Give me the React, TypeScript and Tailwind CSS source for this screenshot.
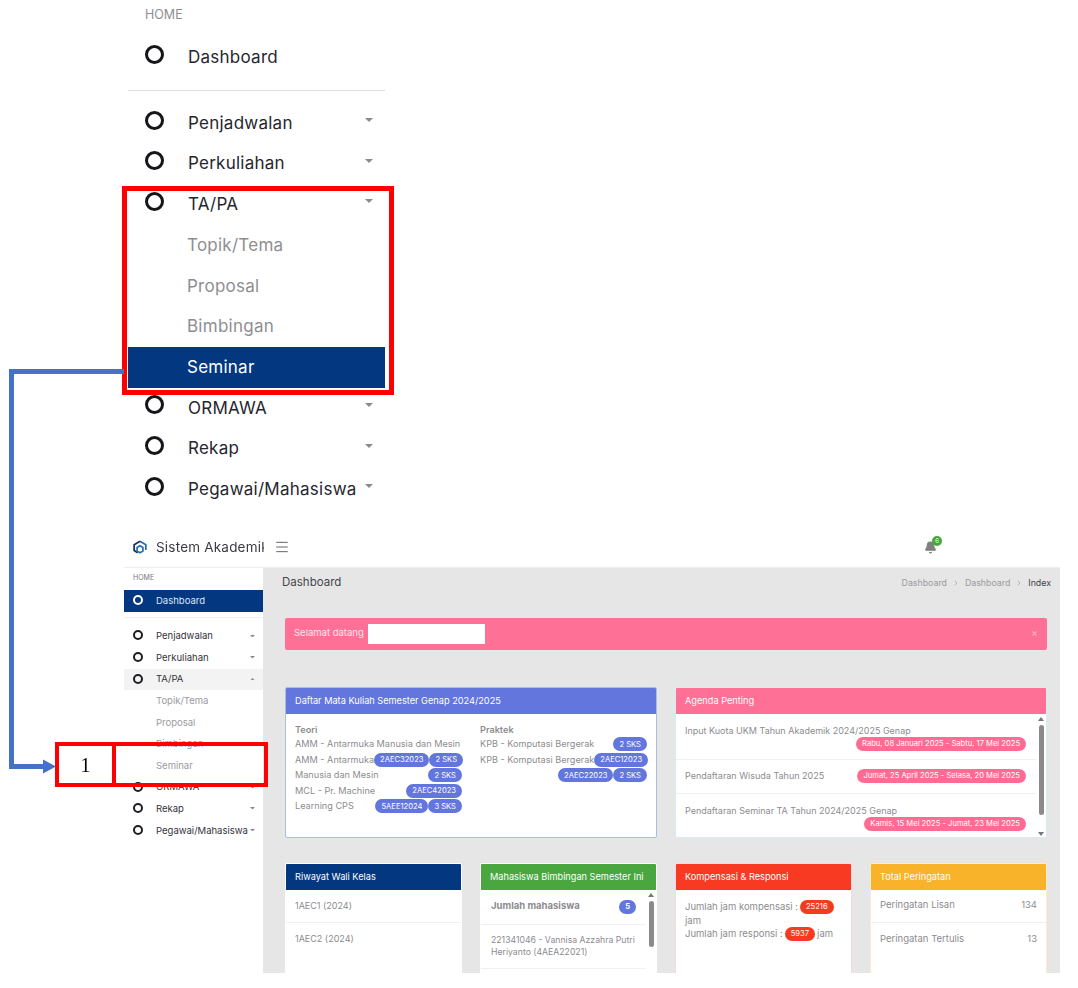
import { Bell, Menu, X, ChevronRight } from 'lucide-react';
import type { ReactNode } from 'react';

const caret = (
  <svg viewBox="0 0 8 4" className="h-[4px] w-[8px] fill-[#8a8a8f]">
    <path d="M0 0h8L4 4z" />
  </svg>
);

function TopItem({ label, arrow = true }: { label: string; arrow?: boolean }) {
  return (
    <div className="flex h-[40.7px] items-center pl-[17px]">
      <span className="mb-[6px] h-[19px] w-[19px] shrink-0 rounded-full border-[3px] border-[#15151a]" />
      <span className="ml-[24px] mt-[1px] whitespace-nowrap text-[17px] tracking-[0.25px] text-[#26262e]">{label}</span>
      {arrow && <span className="absolute left-[237px] mb-[6px]">{caret}</span>}
    </div>
  );
}

function TopSub({ label, active = false }: { label: string; active?: boolean }) {
  return (
    <div
      className={`flex h-[40.7px] items-center pl-[59px] text-[17px] tracking-[0.25px] ${
        active ? 'bg-[#03377f] text-white' : 'text-[#8e8e92]'
      }`}
    >
      <span className="mt-[1px]">{label}</span>
    </div>
  );
}

function SideItem({ label, open = false }: { label: string; open?: boolean }) {
  return (
    <div className={`relative flex h-[21.6px] items-center pl-[9px] ${open ? 'bg-[#f3f3f3]' : ''}`}>
      <span className="mb-[2px] h-[10px] w-[10px] shrink-0 rounded-full border-[2px] border-[#1d1d24]" />
      <span className="ml-[13px] whitespace-nowrap text-[9.5px] text-[#33333b]">{label}</span>
      <span className="absolute right-[8px] top-[9px]">
        <svg viewBox="0 0 8 4" className="h-[2.5px] w-[5px] fill-[#8a8a8f]">
          <path d={open ? 'M0 4h8L4 0z' : 'M0 0h8L4 4z'} />
        </svg>
      </span>
    </div>
  );
}

function SideSub({ label }: { label: string }) {
  return <div className="flex h-[21.6px] items-center pl-[32px] text-[9.5px] text-[#9a9a9e]">{label}</div>;
}

function Badge({ children, className = 'bg-[#6376dd]' }: { children: ReactNode; className?: string }) {
  return (
    <span className={`flex h-[14px] items-center whitespace-nowrap rounded-full px-[6px] text-[7.6px] text-white ${className}`}>
      {children}
    </span>
  );
}

function CourseRow({ label, badges }: { label?: string; badges: string[] }) {
  return (
    <div className="flex h-[15.5px] items-center justify-between whitespace-nowrap">
      <span>{label}</span>
      <span className="flex">
        {badges.map((b) => (
          <Badge key={b}>{b}</Badge>
        ))}
      </span>
    </div>
  );
}

function Card({ title, color, border, children }: { title: string; color: string; border: string; children: ReactNode }) {
  return (
    <div className={`h-full overflow-hidden rounded-[2px] border bg-white text-[9.5px] text-[#8c8c90] ${border}`}>
      <div className={`flex h-[26px] items-center whitespace-nowrap pl-[9px] text-[9.2px] text-white ${color}`}>{title}</div>
      {children}
    </div>
  );
}

function ScrollTrack({ top, height }: { top: string; height: string }) {
  return (
    <div className="absolute bottom-0 right-0 top-0 w-[10px]">
      <div className="absolute left-[2px] top-[3px] h-0 w-0 border-x-[3px] border-b-[4px] border-x-transparent border-b-[#777]" />
      <div className={`absolute left-[2.5px] w-[5px] rounded-full bg-[#8a8a8a] ${top} ${height}`} />
    </div>
  );
}

export default function App() {
  return (
    <div className="relative h-[988px] w-[1078px] overflow-hidden bg-white font-['Inter',sans-serif]">
      {/* Menu detail */}
      <div className="ml-[128px] w-[257px]">
        <div className="flex h-[37px] items-start pl-[17px] pt-[6px] text-[12.5px] text-[#8e8e92]">HOME</div>
        <div className="relative"><TopItem label="Dashboard" arrow={false} /></div>
        <div className="mt-[12px] h-px bg-[#dcdcde]" />
        <div className="relative mt-[12px]">
          <TopItem label="Penjadwalan" />
        </div>
        <div className="relative"><TopItem label="Perkuliahan" /></div>
        <div className="relative"><TopItem label="TA/PA" /></div>
        <TopSub label="Topik/Tema" />
        <TopSub label="Proposal" />
        <TopSub label="Bimbingan" />
        <TopSub label="Seminar" active />
        <div className="relative"><TopItem label="ORMAWA" /></div>
        <div className="relative"><TopItem label="Rekap" /></div>
        <div className="relative"><TopItem label="Pegawai/Mahasiswa" /></div>
      </div>

      {/* Full page capture */}
      <div className="ml-[124px] mt-[17px] h-[446px] w-[936px] overflow-hidden blur-[0.3px]">
        <header className="flex h-[40px] items-center pt-[1px]">
          <svg viewBox="0 0 24 24" className="ml-[9px] h-[14px] w-[14px]" fill="none" strokeWidth="3">
            <path d="M12 2 22 8v9" stroke="#2a6fb0" />
            <path d="M12 2 2 8v10l6 4" stroke="#16324f" />
            <path d="M12 10l5 3v6l-5 3-5-3v-6z" stroke="#2a6fb0" />
          </svg>
          <div className="ml-[9px] w-[108px] overflow-hidden whitespace-nowrap text-[13.5px] tracking-[0.2px] text-[#3a3a42]">Sistem Akademik</div>
          <Menu className="ml-[10px] h-[16px] w-[16px] text-[#666]" strokeWidth={1.5} />
          <div className="relative ml-[634px]">
            <Bell className="h-[13px] w-[13px] fill-[#808080] text-[#808080]" />
            <span className="absolute -right-[5px] -top-[5px] flex h-[10px] w-[10px] items-center justify-center rounded-full bg-[#45a93a] text-[6px] text-white">6</span>
          </div>
        </header>
        <div className="flex h-[406px] border-t border-[#eeeeee]">
          <aside className="w-[139px] shrink-0 bg-white">
            <div className="flex h-[22px] items-center pl-[9px] text-[7px] text-[#77777c]">HOME</div>
            <div className="flex h-[22px] items-center bg-[#03377f] pl-[9px]">
              <span className="mb-[1px] h-[10px] w-[10px] rounded-full border-[2px] border-white" />
              <span className="ml-[13px] mt-[2px] text-[9.5px] text-[#dfe6f5]">Dashboard</span>
            </div>
            <div className="mt-[5px] h-[1px] bg-[#f0f0f0]" />
            <div className="mt-[8px]">
              <SideItem label="Penjadwalan" />
              <SideItem label="Perkuliahan" />
              <SideItem label="TA/PA" open />
              <SideSub label="Topik/Tema" />
              <SideSub label="Proposal" />
              <SideSub label="Bimbingan" />
              <SideSub label="Seminar" />
              <SideItem label="ORMAWA" />
              <SideItem label="Rekap" />
              <SideItem label="Pegawai/Mahasiswa" />
            </div>
          </aside>

          <main className="min-w-0 flex-1 bg-[#e6e6e6]">
            <div className="flex h-[31px] items-center justify-between pl-[19px] pr-[9px]">
              <h1 className="text-[11.5px] text-[#45454c]">Dashboard</h1>
              <div className="flex items-center gap-[5px] text-[8.8px] text-[#9a9a9e]">
                <span>Dashboard</span>
                <ChevronRight className="h-[8px] w-[8px]" />
                <span>Dashboard</span>
                <ChevronRight className="h-[8px] w-[8px]" />
                <span className="text-[#3e3e46]">Index</span>
              </div>
            </div>

            <div className="ml-[22px] mr-[13px] mt-[19px]">
              <div className="flex h-[32px] items-center justify-between rounded-[2px] bg-[#ff7096] pl-[9px] pr-[9px] text-[9.5px] text-[#ffe6ed]">
                <div className="flex items-center">
                  <span className="whitespace-nowrap">Selamat datang</span>
                  <span className="ml-[4px] h-[20px] w-[117px] bg-white" />
                </div>
                <X className="h-[7px] w-[7px] text-[#ffa8bf]" strokeWidth={4} />
              </div>

              <div className="mt-[37px] grid h-[151px] grid-cols-2 gap-[18px]">
                <Card title="Daftar Mata Kuliah Semester Genap 2024/2025" color="bg-[#6376dd]" border="border-[#a9bfdc]">
                  <div className="grid grid-cols-2 gap-[18px] px-[9px] pt-[9px] text-[9.15px]">
                    <div>
                      <div className="h-[14px] font-semibold">Teori</div>
                      <CourseRow label="AMM - Antarmuka Manusia dan Mesin" badges={[]} />
                      <CourseRow label="AMM - Antarmuka" badges={['2AEC32023', '2 SKS']} />
                      <CourseRow label="Manusia dan Mesin" badges={['2 SKS']} />
                      <CourseRow label="MCL - Pr. Machine" badges={['2AEC42023']} />
                      <CourseRow label="Learning CPS" badges={['5AEE12024', '3 SKS']} />
                    </div>
                    <div>
                      <div className="h-[14px] font-semibold">Praktek</div>
                      <CourseRow label="KPB - Komputasi Bergerak" badges={['2 SKS']} />
                      <CourseRow label="KPB - Komputasi Bergerak" badges={['2AEC12023']} />
                      <CourseRow badges={['2AEC22023', '2 SKS']} />
                    </div>
                  </div>
                </Card>
                <Card title="Agenda Penting" color="bg-[#ff7096]" border="border-[#d8ecf2]">
                  <div className="relative h-[124px] pr-[10px] text-[9px]">
                    <div className="h-[46px] border-b border-[#f0f0f0] pl-[9px] pr-[10px] pt-[10px]">
                      <div className="whitespace-nowrap leading-[13px]">Input Kuota UKM Tahun Akademik 2024/2025 Genap</div>
                      <div className="flex justify-end"><Badge className="bg-[#ff6b92]">Rabu, 08 Januari 2025 - Sabtu, 17 Mei 2025</Badge></div>
                    </div>
                    <div className="flex h-[34px] items-center justify-between border-b border-[#f0f0f0] pl-[9px] pr-[10px]">
                      <span className="whitespace-nowrap">Pendaftaran Wisuda Tahun 2025</span>
                      <Badge className="bg-[#ff6b92]">Jumat, 25 April 2025 - Selasa, 20 Mei 2025</Badge>
                    </div>
                    <div className="pl-[9px] pr-[10px] pt-[10px]">
                      <div className="whitespace-nowrap leading-[13px]">Pendaftaran Seminar TA Tahun 2024/2025 Genap</div>
                      <div className="flex justify-end"><Badge className="bg-[#ff6b92]">Kamis, 15 Mei 2025 - Jumat, 23 Mei 2025</Badge></div>
                    </div>
                    <ScrollTrack top="top-[11px]" height="h-[90px]" />
                    <div className="absolute bottom-[2px] right-[2px] h-0 w-0 border-x-[3px] border-t-[4px] border-x-transparent border-t-[#777]" />
                  </div>
                </Card>
              </div>

              <div className="mt-[25px] grid h-[120px] grid-cols-4 gap-[18px]">
                <Card title="Riwayat Wali Kelas" color="bg-[#03377f]" border="border-white">
                  <div className="flex h-[33px] items-center border-b border-[#f0f0f0] pl-[9px] text-[9px]">1AEC1 (2024)</div>
                  <div className="flex h-[33px] items-center pl-[9px] text-[9px]">1AEC2 (2024)</div>
                </Card>
                <Card title="Mahasiswa Bimbingan Semester Ini" color="bg-[#4aa63f]" border="border-white">
                  <div className="relative h-[94px] pr-[10px]">
                    <div className="flex h-[35px] items-center justify-between border-b border-[#f0f0f0] pl-[10px] pr-[10px] font-bold">
                      <span className="whitespace-nowrap">Jumlah mahasiswa</span>
                      <Badge>5</Badge>
                    </div>
                    <div className="border-b border-[#f0f0f0] py-[9px] pl-[10px] pr-[8px] text-[8.7px] leading-[12.5px]">221341046 - Vannisa Azzahra Putri Heriyanto (4AEA22021)</div>
                    <ScrollTrack top="top-[11px]" height="h-[46px]" />
                  </div>
                </Card>
                <Card title="Kompensasi & Responsi" color="bg-[#f83a22]" border="border-[#f8d8de]">
                  <div className="pl-[9px] pr-[6px] pt-[10px] leading-[13.5px]">
                    <div className="flex items-center whitespace-nowrap">Jumlah jam kompensasi :<Badge className="ml-[2px] bg-[#f83a22]">25216</Badge></div>
                    <div>jam</div>
                    <div className="flex items-center whitespace-nowrap">Jumlah jam responsi :<Badge className="mx-[2px] bg-[#f83a22]">5937</Badge>jam</div>
                  </div>
                </Card>
                <Card title="Total Peringatan" color="bg-[#f8b32b]" border="border-[#fbeccb]">
                  <div className="flex h-[33px] items-center justify-between border-b border-[#f0f0f0] pl-[9px] pr-[9px]"><span>Peringatan Lisan</span><span>134</span></div>
                  <div className="flex h-[33px] items-center justify-between pl-[9px] pr-[9px]"><span>Peringatan Tertulis</span><span>13</span></div>
                </Card>
              </div>
            </div>
          </main>
        </div>
      </div>

      {/* Annotations over the captures */}
      <div className="absolute left-[122px] top-[186px] h-[209px] w-[272px] border-[5px] border-[#ff0000]" />
      <svg className="absolute left-0 top-0 h-[988px] w-[128px]" viewBox="0 0 128 988" fill="none">
        <path d="M124 371.5H11.5V766.5H45" stroke="#4472c4" strokeWidth="5" />
        <path d="M43 759.5 56 766.5 43 773.5z" fill="#4472c4" />
      </svg>
      <div className="absolute left-[55px] top-[742px] flex h-[45px] w-[61px] items-center justify-center border-[4px] border-[#ff0000] font-['Liberation_Serif',serif] text-[20px] text-black">
        1
      </div>
      <div className="absolute left-[112px] top-[742px] h-[45px] w-[156px] border-[4px] border-[#ff0000]" />
    </div>
  );
}
